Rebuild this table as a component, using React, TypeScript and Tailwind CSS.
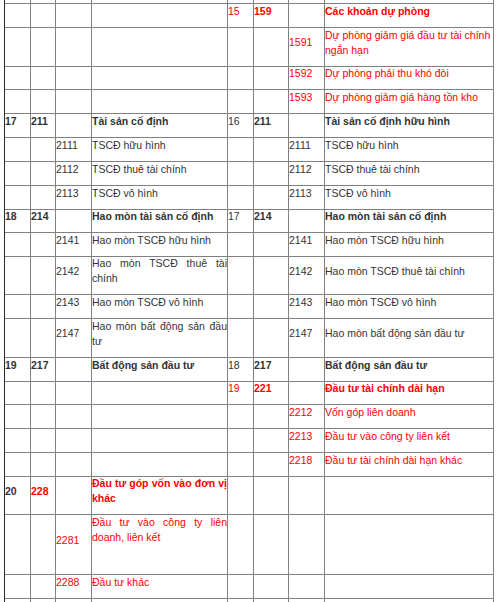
import React from "react";

type Cell = {
  t?: React.ReactNode;
  red?: boolean;
  bold?: boolean;
  just?: string[]; // justified two-line text
  top?: boolean;
};

type Row = { h: number; c: Cell[] };

const W = ["w-[26px]", "w-[25px]", "w-[36px]", "w-[136px]", "w-[26px]", "w-[35px]", "w-[36px]", "w-[169px]"];

const E: Cell = {};
const r = (t: string, bold = false): Cell => ({ t, red: true, bold });
const k = (t: string, bold = false): Cell => ({ t, bold });

const rows: Row[] = [
  { h: 4, c: [E, E, E, E, E, E, E, E] },
  { h: 24, c: [E, E, E, E, r("15"), r("159", true), E, r("Các khoản dự phòng", true)] },
  {
    h: 39,
    c: [E, E, E, E, E, E, r("1591"), { t: <>Dự phòng giảm giá đầu tư tài chính<br />ngắn hạn</>, red: true }],
  },
  { h: 23, c: [E, E, E, E, E, E, r("1592"), r("Dự phòng phải thu khó đòi")] },
  { h: 24, c: [E, E, E, E, E, E, r("1593"), r("Dự phòng giảm giá hàng tồn kho")] },
  { h: 24, c: [k("17", true), k("211", true), E, k("Tài sản cố định", true), k("16"), k("211", true), E, k("Tài sản cố định hữu hình", true)] },
  { h: 24, c: [E, E, k("2111"), k("TSCĐ hữu hình"), E, E, k("2111"), k("TSCĐ hữu hình")] },
  { h: 24, c: [E, E, k("2112"), k("TSCĐ thuê tài chính"), E, E, k("2112"), k("TSCĐ thuê tài chính")] },
  { h: 24, c: [E, E, k("2113"), k("TSCĐ vô hình"), E, E, k("2113"), k("TSCĐ vô hình")] },
  { h: 23, c: [k("18", true), k("214", true), E, k("Hao mòn tài sản cố định", true), k("17"), k("214", true), E, k("Hao mòn tài sản cố định", true)] },
  { h: 24, c: [E, E, k("2141"), k("Hao mòn TSCĐ hữu hình"), E, E, k("2141"), k("Hao mòn TSCĐ hữu hình")] },
  { h: 38, c: [E, E, k("2142"), { just: ["Hao mòn TSCĐ thuê tài", "chính"] }, E, E, k("2142"), k("Hao mòn TSCĐ thuê tài chính")] },
  { h: 24, c: [E, E, k("2143"), k("Hao mòn TSCĐ vô hình"), E, E, k("2143"), k("Hao mòn TSCĐ vô hình")] },
  { h: 39, c: [E, E, k("2147"), { just: ["Hao mòn bất động sản đầu", "tư"] }, E, E, k("2147"), k("Hao mòn bất động sản đầu tư")] },
  { h: 24, c: [k("19", true), k("217", true), E, k("Bất động sản đầu tư", true), k("18"), k("217", true), E, k("Bất động sản đầu tư", true)] },
  { h: 23, c: [E, E, E, E, r("19"), r("221", true), E, r("Đầu tư tài chính dài hạn", true)] },
  { h: 24, c: [E, E, E, E, E, E, r("2212"), r("Vốn góp liên doanh")] },
  { h: 24, c: [E, E, E, E, E, E, r("2213"), r("Đầu tư vào công ty liên kết")] },
  { h: 24, c: [E, E, E, E, E, E, r("2218"), r("Đầu tư tài chính dài hạn khác")] },
  { h: 38, c: [k("20", true), r("228", true), E, { just: ["Đầu tư góp vốn vào đơn vị", "khác"], red: true, bold: true }, E, E, E, E] },
  { h: 60, c: [E, E, r("2281"), { just: ["Đầu tư vào công ty liên", "doanh, liên kết"], red: true, top: true }, E, E, E, E] },
  { h: 24, c: [E, E, r("2288"), r("Đầu tư khác"), E, E, E, E] },
  { h: 20, c: [E, E, E, E, E, E, E, E] },
];

function CellView({ cell, w }: { cell: Cell; w: string }) {
  const color = cell.red ? "text-[#f00]" : "text-[#333]";
  const weight = cell.bold ? "font-bold" : "font-normal";
  return (
    <div
      className={`${w} shrink-0 h-full border-r border-[#808080] pb-[9px] flex flex-col ${
        cell.top ? "justify-start" : "justify-center"
      } ${color} ${weight}`}
    >
      {cell.just ? (
        <div>
          <div className="text-justify [text-align-last:justify]">{cell.just[0]}</div>
          <div>{cell.just[1]}</div>
        </div>
      ) : (
        <div className="whitespace-nowrap">{cell.t}</div>
      )}
    </div>
  );
}

export default function App() {
  return (
    <div
      className="w-[500px] h-[602px] overflow-hidden bg-white text-[10.5px] leading-[15px]"
      style={{ fontFamily: '"Liberation Sans", Arial, sans-serif' }}
    >
      <div className="ml-[4px] w-[490px] border-l border-[#2a2a2a] flex flex-col">
        {rows.map((row, i) => (
          <div
            key={i}
            className={`flex ${i === rows.length - 1 ? "" : "border-b border-[#808080]"}`}
            style={{ height: row.h }}
          >
            {row.c.map((cell, j) => (
              <CellView key={j} cell={cell} w={W[j]} />
            ))}
          </div>
        ))}
      </div>
    </div>
  );
}
